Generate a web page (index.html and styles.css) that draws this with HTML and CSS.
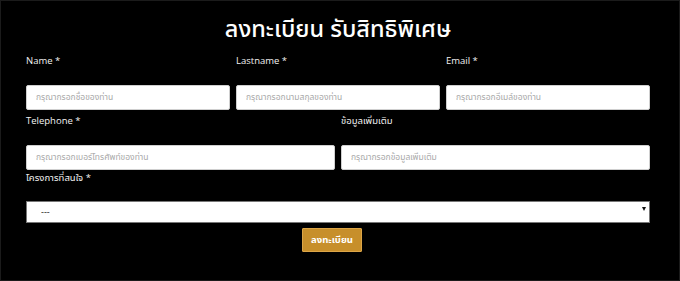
FILE: index.html
```html
<!DOCTYPE html>
<html lang="th">
<head>
<meta charset="utf-8">
<title>ลงทะเบียน รับสิทธิพิเศษ</title>
<link rel="stylesheet" href="styles.css">
</head>
<body>
<div class="page">
  <h1 class="title">ลงทะเบียน รับสิทธิพิเศษ</h1>
  <form class="form">
    <div class="row row-3">
      <div class="field">
        <label class="label">Name *</label>
        <input class="input" type="text" placeholder="กรุณากรอกชื่อของท่าน">
      </div>
      <div class="field">
        <label class="label">Lastname *</label>
        <input class="input" type="text" placeholder="กรุณากรอกนามสกุลของท่าน">
      </div>
      <div class="field">
        <label class="label">Email *</label>
        <input class="input" type="text" placeholder="กรุณากรอกอีเมล์ของท่าน">
      </div>
    </div>
    <div class="row row-2">
      <div class="field">
        <label class="label">Telephone *</label>
        <input class="input" type="text" placeholder="กรุณากรอกเบอร์โทรศัพท์ของท่าน">
      </div>
      <div class="field">
        <label class="label">ข้อมูลเพิ่มเติม</label>
        <input class="input" type="text" placeholder="กรุณากรอกข้อมูลเพิ่มเติม">
      </div>
    </div>
    <div class="row row-1">
      <div class="field">
        <label class="label label-select">โครงการที่สนใจ *</label>
        <div class="select-wrap">
          <select class="select"><option>---</option></select>
        </div>
      </div>
    </div>
    <div class="actions">
      <button class="btn" type="button">ลงทะเบียน</button>
    </div>
  </form>
</div>
</body>
</html>
```
FILE: styles.css
```css
* { box-sizing: border-box; }
html, body { margin: 0; padding: 0; background: #000; }
body {
  font-family: "Open Sans", "Noto Sans", "Noto Sans Thai", sans-serif;
  color: #fff;
}
.page {
  width: 680px;
  height: 281px;
  border: 1px solid #1b1b1b;
  background: #000;
  padding: 0 29px 0 25px;
}
.title {
  margin: 0;
  padding-top: 12px;
  height: 50px;
  text-align: center;
  font-family: "Noto Sans Thai", "Noto Sans", sans-serif;
  font-size: 23.5px;
  line-height: 34px;
  font-weight: 500;
  color: #fff;
}
.form { display: flex; flex-direction: column; }
.row { display: grid; gap: 6px; }
.row-3 { grid-template-columns: repeat(3, 1fr); margin-top: 3px; }
.row-2 { grid-template-columns: repeat(2, 1fr); margin-top: 4px; }
.row-1 { grid-template-columns: 1fr; margin-top: 1px; }
.field { display: flex; flex-direction: column; }
.label {
  font-size: 9.5px;
  line-height: 14px;
  height: 14px;
  margin-bottom: 17px;
  color: #f2f2f2;
}
.label-select { margin-bottom: 13px; }
.input {
  height: 25px;
  border: 1px solid #cfcfcf;
  border-radius: 2px;
  background: #fff;
  padding: 0 9px;
  font-family: "Noto Sans Thai", "Open Sans", sans-serif;
  font-size: 8.5px;
  color: #333;
  outline: none;
}
.input::placeholder { color: #a9a9a9; }
.select-wrap { position: relative; }
.select-wrap::after {
  content: "";
  position: absolute;
  right: 4px;
  top: 9px;
  border-left: 2.5px solid transparent;
  border-right: 2.5px solid transparent;
  border-top: 4px solid #111;
}
.select {
  width: 100%;
  height: 22px;
  appearance: none;
  -webkit-appearance: none;
  border: 1px solid #777;
  border-radius: 0;
  background: #fff;
  padding: 0 0 0 14px;
  font-family: "Open Sans", sans-serif;
  font-size: 9px;
  color: #111;
  outline: none;
}
.actions {
  display: flex;
  justify-content: center;
  padding-right: 12px;
  margin-top: 5px;
}
.btn {
  width: 60px;
  height: 24px;
  background: #c78f2b;
  border: 1px solid #dca547;
  border-radius: 1px;
  color: #fff;
  font-family: "Noto Sans Thai", "Open Sans", sans-serif;
  font-size: 9.5px;
  font-weight: 700;
  padding: 0;
}
```
